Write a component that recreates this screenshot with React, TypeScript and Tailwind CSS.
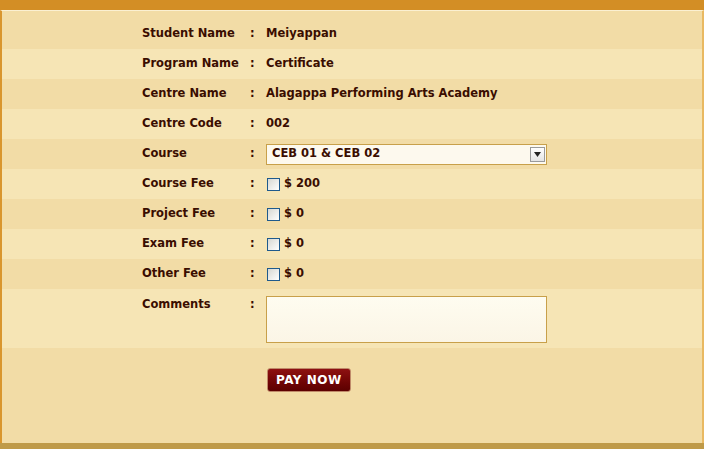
const rows: { label: string; value?: string; kind?: "text" | "fee" | "select" }[] = [
  { label: "Student Name", value: "Meiyappan" },
  { label: "Program Name", value: "Certificate" },
  { label: "Centre Name", value: "Alagappa Performing Arts Academy" },
  { label: "Centre Code", value: "002" },
  { label: "Course", value: "CEB 01 & CEB 02", kind: "select" },
  { label: "Course Fee", value: "$ 200", kind: "fee" },
  { label: "Project Fee", value: "$ 0", kind: "fee" },
  { label: "Exam Fee", value: "$ 0", kind: "fee" },
  { label: "Other Fee", value: "$ 0", kind: "fee" },
];

function Check() {
  return (
    <span className="inline-block w-[13px] h-[13px] border border-[#1f5a8c] bg-gradient-to-br from-[#d8d8d2] to-white" />
  );
}

export default function App() {
  return (
    <div
      className="w-[704px] h-[449px] flex flex-col bg-[#f2dca6] text-[#3a0d00] text-[11.5px] font-bold"
      style={{ fontFamily: '"DejaVu Sans", Verdana, sans-serif' }}
    >
      <div className="h-[10px] bg-[#d38e25] shrink-0" />
      <div className="flex-1 flex flex-col border-l-2 border-l-[#d9962e] border-r-2 border-r-[#e9b962] border-t border-t-[#fbf0d2]">
        <div className="h-[8px]" />
        {rows.map((r, i) => (
          <div
            key={r.label}
            className={`h-[30px] flex items-center ${i % 2 === 0 ? "bg-[#f2dca6]" : "bg-[#f6e5b5]"}`}
          >
            <div className="w-[140px]" />
            <div className="w-[108px]">{r.label}</div>
            <div className="w-[16px]">:</div>
            {r.kind === "select" ? (
              <div className="w-[281px] h-[21px] border border-[#c8a04a] bg-[#fdf9ee] flex items-center justify-between pl-[5px] pr-[1px]">
                <span>{r.value}</span>
                <span className="w-[15px] h-[15px] border border-[#9a9a9a] bg-gradient-to-b from-white to-[#e4e4e4] flex items-center justify-center">
                  <svg width="7" height="5" viewBox="0 0 7 5">
                    <path d="M0 0h7L3.5 5z" fill="#222" />
                  </svg>
                </span>
              </div>
            ) : r.kind === "fee" ? (
              <div className="flex items-center gap-[4px] pl-[1px]">
                <Check />
                <span>{r.value}</span>
              </div>
            ) : (
              <div>{r.value}</div>
            )}
          </div>
        ))}
        <div className="h-[59px] flex bg-[#f6e5b5] pt-[7px]">
          <div className="w-[140px]" />
          <div className="w-[108px]">Comments</div>
          <div className="w-[16px]">:</div>
          <div className="w-[281px] h-[47px] border border-[#c8a04a] bg-gradient-to-b from-[#fefcf0] to-[#fbf5e6]" />
        </div>
        <div className="flex-1 flex pt-[20px] pl-[265px]">
          <button className="h-[24px] px-[8px] rounded-[3px] border border-[#c08a6a] bg-gradient-to-b from-[#8e1111] to-[#5c0000] text-white text-[12px] font-bold tracking-[0.5px]">
            PAY NOW
          </button>
        </div>
      </div>
      <div className="h-[6px] bg-[#bf9a48] shrink-0" />
    </div>
  );
}
